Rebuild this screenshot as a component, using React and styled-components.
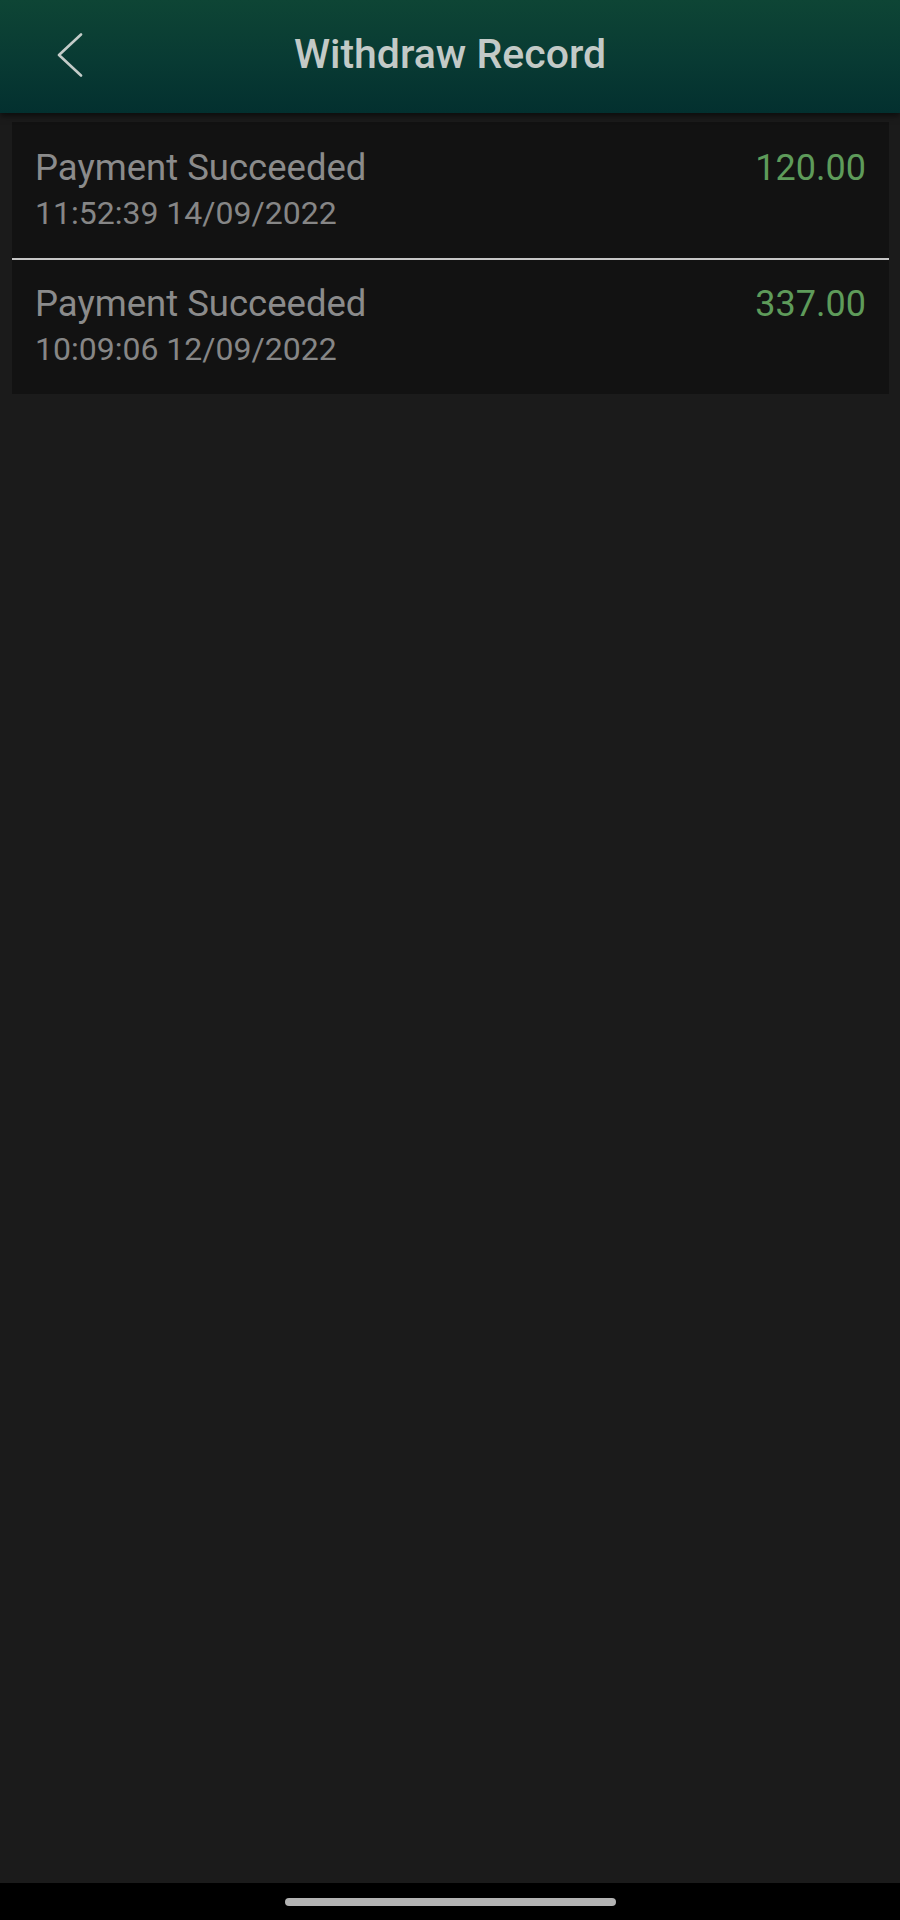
import React from 'react';
import styled, { createGlobalStyle } from 'styled-components';

const GlobalStyle = createGlobalStyle`
  html, body {
    margin: 0;
    padding: 0;
    background: #1b1b1b;
  }
  body {
    font-family: Roboto, "Liberation Sans", sans-serif;
  }
`;

const Page = styled.div`
  min-height: 1920px;
  display: flex;
  flex-direction: column;
  background: #1b1b1b;
`;

const Header = styled.header`
  height: 113px;
  display: grid;
  grid-template-columns: 1fr auto 1fr;
  align-items: center;
  background: linear-gradient(180deg, #0e4535 0%, #083a33 55%, #03302f 100%);
  box-shadow: 0 3px 6px rgba(0, 0, 0, 0.55);
  position: relative;
  z-index: 1;
`;

const BackButton = styled.button`
  justify-self: start;
  margin-left: 50px;
  margin-bottom: 4px;
  width: 40px;
  height: 56px;
  padding: 0;
  border: none;
  background: none;
  display: flex;
  align-items: center;
  justify-content: center;
  cursor: pointer;
`;

const Title = styled.h1`
  margin: 0 0 6px;
  font-size: 41px;
  font-weight: 500;
  color: #c3cac7;
  letter-spacing: 0;
`;

const Main = styled.main`
  flex: 1;
  padding: 9px 11px 0 12px;
`;

const List = styled.ul`
  list-style: none;
  margin: 0;
  padding: 0;
  background: #121212;
`;

const Row = styled.li`
  display: flex;
  justify-content: space-between;
  align-items: flex-start;
  padding: ${(p) => (p.first ? '24px' : '22px')} 23px 22px 23px;
  border-top: ${(p) => (p.first ? 'none' : '2px solid #c6c6c6')};
`;

const Info = styled.div`
  display: flex;
  flex-direction: column;
`;

const Status = styled.span`
  font-size: 36.5px;
  line-height: 44px;
  color: #8b8b8b;
`;

const Time = styled.span`
  font-size: 32px;
  line-height: 46px;
  color: #868686;
`;

const Amount = styled.span`
  font-size: 36px;
  line-height: 44px;
  color: #5e9b5a;
`;

const NavBar = styled.div`
  height: 37px;
  background: #000;
  display: flex;
  justify-content: center;
  padding-top: 15px;
  box-sizing: border-box;
`;

const HomeIndicator = styled.div`
  width: 331px;
  height: 8px;
  border-radius: 4px;
  background: #b3b3b3;
`;

const records = [
  { status: 'Payment Succeeded', time: '11:52:39 14/09/2022', amount: '120.00' },
  { status: 'Payment Succeeded', time: '10:09:06 12/09/2022', amount: '337.00' },
];

export default function App() {
  return (
    <Page>
      <GlobalStyle />
      <Header>
        <BackButton aria-label="Back">
          <svg width="28" height="44" viewBox="0 0 28 44" fill="none">
            <path d="M25 1.5 L3 22 L25 42.5" stroke="#c4ccc9" strokeWidth="2.6" strokeLinecap="round" strokeLinejoin="round" />
          </svg>
        </BackButton>
        <Title>Withdraw Record</Title>
        <div />
      </Header>
      <Main>
        <List>
          {records.map((r, i) => (
            <Row key={i} first={i === 0}>
              <Info>
                <Status>{r.status}</Status>
                <Time>{r.time}</Time>
              </Info>
              <Amount>{r.amount}</Amount>
            </Row>
          ))}
        </List>
      </Main>
      <NavBar>
        <HomeIndicator />
      </NavBar>
    </Page>
  );
}
